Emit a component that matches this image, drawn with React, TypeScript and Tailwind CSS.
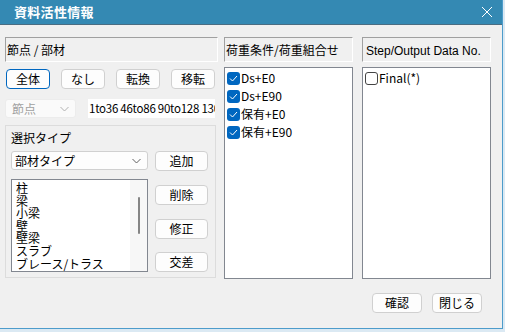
import React from 'react'

const font = "font-['Noto_Sans_CJK_JP','Liberation_Sans',sans-serif]"

function Btn({ label, w = 'w-[44px]', focus = false }: { label: string; w?: string; focus?: boolean }) {
  return (
    <button
      className={
        focus
          ? `${w} block h-[20px] shrink-0 rounded-[4px] border border-[#0067c0] bg-[#fdfdfd] text-[12px] leading-[18px] text-black`
          : `${w} block h-[20px] shrink-0 rounded-[4px] border border-[#d0d0d0] bg-[#fdfdfd] text-[12px] leading-[18px] text-black`
      }
    >
      {label}
    </button>
  )
}

function Header({ children }: { children: React.ReactNode }) {
  return (
    <div className="h-[25px] border-t border-l border-[#a0a0a0] border-b-white border-r-white border-b border-r bg-[#f0f0f0] pl-[1px] text-[12px] leading-[23px] text-black">
      {children}
    </div>
  )
}

function Chevron({ color }: { color: string }) {
  return (
    <svg width="9" height="6" viewBox="0 0 9 6" fill="none">
      <path d="M0.5 1 L4.5 5 L8.5 1" stroke={color} strokeWidth="1" />
    </svg>
  )
}

function Check({ checked, label }: { checked: boolean; label: string }) {
  return (
    <div className="flex h-[18px] items-center">
      {checked ? (
        <span className="flex h-[13px] w-[13px] items-center justify-center rounded-[3px] bg-[#0067c0]">
          <svg width="9" height="7" viewBox="0 0 9 7" fill="none">
            <path d="M1 3.5 L3.5 6 L8 1" stroke="white" strokeWidth="1" />
          </svg>
        </span>
      ) : (
        <span className="h-[13px] w-[13px] rounded-[3px] border border-[#444] bg-white" />
      )}
      <span className="ml-[1px] text-[12px] leading-[18px] text-black">{label}</span>
    </div>
  )
}

export default function App() {
  const members = ['柱', '梁', '小梁', '壁', '壁梁', 'スラブ', 'ブレース/トラス']
  const loads = ['Ds+E0', 'Ds+E90', '保有+E0', '保有+E90']

  return (
    <div className={`${font} h-[332px] w-[505px] bg-[#dbe9f3]`}>
      <div className="h-[329px] w-[503px] border-r border-b border-[#4d9ccb] bg-[#f0f0f0]">
        {/* title */}
        <div className="flex h-[25px] items-center justify-between border-b border-[#4a6d82] bg-[#3489b3] pl-[14px] pr-[9px]">
          <span className="text-[13px] font-bold tracking-[0.3px] text-white">資料活性情報</span>
          <svg width="12" height="12" viewBox="0 0 12 12" fill="none">
            <path d="M1 1 L11 11 M11 1 L1 11" stroke="white" strokeWidth="1" />
          </svg>
        </div>

        <div className="pt-[12px] pl-[5px]">
          <div className="flex h-[242px]">
            {/* left */}
            <div className="flex w-[213px] flex-col">
              <Header>節点 / 部材</Header>
              <div className="mt-[7px] flex justify-between pl-[1px] pr-[3px]">
                <Btn label="全体" focus />
                <Btn label="なし" />
                <Btn label="転換" />
                <Btn label="移転" />
              </div>
              <div className="mt-[10px] flex h-[19px] items-center">
                <div className="flex h-[19px] w-[71px] items-center justify-between rounded-[3px] border border-[#ececec] bg-[#fafafa] pl-[6px] pr-[6px] text-[12px] text-[#a0a0a0]">
                  <span>節点</span>
                  <Chevron color="#b0b0b0" />
                </div>
                <div className="ml-[12px] h-[19px] w-[127px] overflow-hidden whitespace-nowrap bg-white pl-[1px] text-[11.5px] leading-[19px] tracking-[-0.25px] text-black">
                  1to36 46to86 90to128 130to166
                </div>
              </div>
              <div className="mt-[7px] flex h-[153px] w-[211px] flex-col border border-[#dcdcdc] pt-[3px] pl-[5px]">
                <div className="h-[18px] text-[12px] leading-[18px] text-black">選択タイプ</div>
                <div className="mt-[4px] flex h-[20px] items-start">
                  <div className="flex h-[19px] w-[137px] items-center justify-between rounded-[3px] border border-[#d0d0d0] bg-[#fdfdfd] pl-[3px] pr-[6px] text-[12px] text-black">
                    <span>部材タイプ</span>
                    <Chevron color="#606060" />
                  </div>
                  <div className="ml-[7px] flex">
                    <Btn label="追加" w="w-[53px]" />
                  </div>
                </div>
                <div className="flex h-[101px]">
                  <div className="mt-[8px] flex h-[93px] w-[137px] border border-[#828790] bg-white">
                    <div className="flex-1 overflow-hidden pl-[4px] pt-[2px] text-[12px] leading-[12.6px] text-black">
                      {members.map((m) => (
                        <div key={m} className="h-[12.6px]">
                          {m}
                        </div>
                      ))}
                    </div>
                    <div className="flex w-[17px] justify-center bg-[#f7f7f7] pt-[17px]">
                      <div className="h-[37px] w-[2px] rounded-full bg-[#858585]" />
                    </div>
                  </div>
                  <div className="ml-[7px] flex h-[101px] flex-col justify-between pt-[14px]">
                    <Btn label="削除" w="w-[53px]" />
                    <Btn label="修正" w="w-[53px]" />
                    <Btn label="交差" w="w-[53px]" />
                  </div>
                </div>
              </div>
            </div>

            {/* middle */}
            <div className="ml-[6px] flex w-[129px] flex-col">
              <Header>荷重条件/荷重組合せ</Header>
              <div className="mt-[5px] h-[212px] border border-[#828790] bg-white pl-[2px] pt-[1px]">
                {loads.map((l) => (
                  <Check key={l} checked label={l} />
                ))}
              </div>
            </div>

            {/* right */}
            <div className="ml-[9px] flex w-[129px] flex-col">
              <Header>
                <span className="pl-[2px] font-['Liberation_Sans',sans-serif]">Step/Output Data No.</span>
              </Header>
              <div className="mt-[5px] h-[212px] border border-[#828790] bg-white pl-[2px] pt-[1px]">
                <Check checked={false} label="Final(*)" />
              </div>
            </div>
          </div>

          <div className="mt-[14px] flex justify-end gap-[10px] pr-[20px]">
            <Btn label="確認" w="w-[50px]" />
            <Btn label="閉じる" w="w-[50px]" />
          </div>
        </div>
      </div>
    </div>
  )
}
